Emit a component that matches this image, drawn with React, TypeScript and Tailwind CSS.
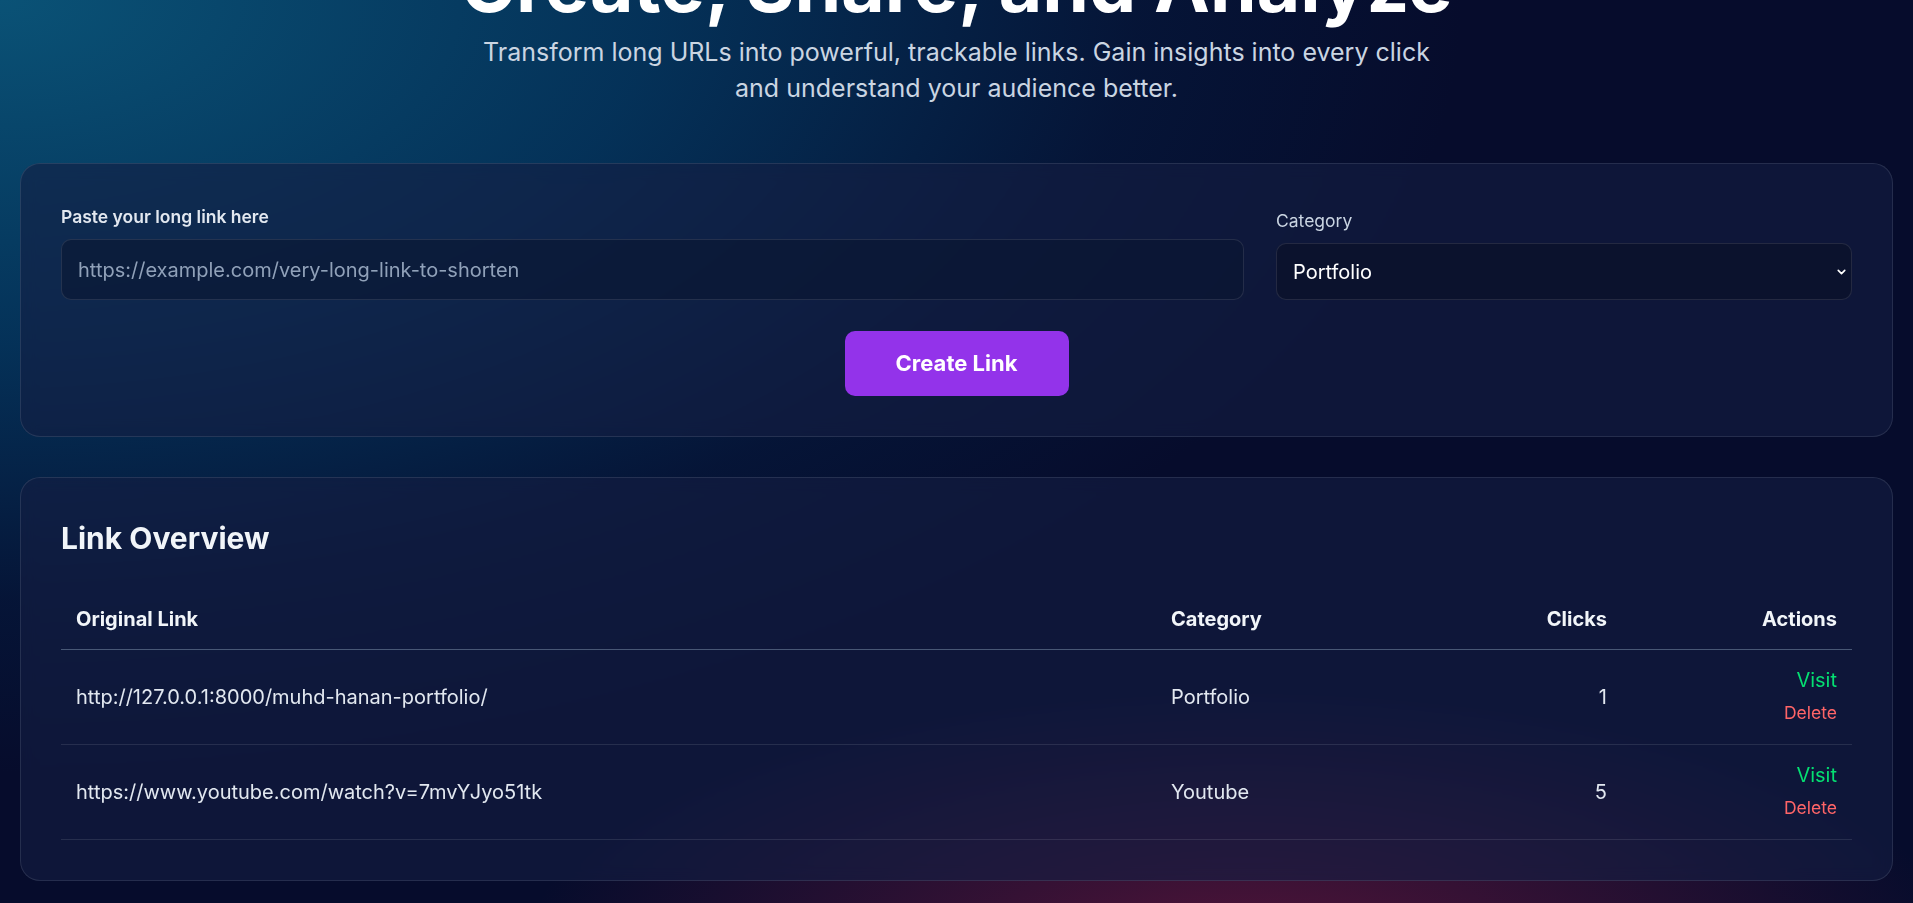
import { ChevronDown } from 'lucide-react';

type LinkRow = {
  url: string;
  category: string;
  clicks: number;
};

const links: LinkRow[] = [
  { url: 'http://127.0.0.1:8000/muhd-hanan-portfolio/', category: 'Portfolio', clicks: 1 },
  { url: 'https://www.youtube.com/watch?v=7mvYJyo51tk', category: 'Youtube', clicks: 5 },
];

export default function App() {
  return (
    <div className="h-[903px] w-full overflow-hidden bg-[#060c2c] bg-[image:radial-gradient(ellipse_85%_95%_at_0%_0%,rgba(10,82,118,1),rgba(4,56,96,0.85)_40%,rgba(4,40,80,0.3)_70%,transparent_90%),radial-gradient(ellipse_50%_38%_at_65%_105%,rgba(100,22,60,0.8),transparent_75%)] font-['Inter',sans-serif] text-slate-200">
      {/* Hero */}
      <div className="flex flex-col items-center px-5 text-center">
        <h1 className="-mt-[53px] text-[75px] font-bold leading-none text-white">
          Create, Share, and Analyze
        </h1>
        <p className="mt-[12px] max-w-[960px] text-[25px] leading-[36px] text-slate-300">
          Transform long URLs into powerful, trackable links. Gain insights into every click and understand your audience better.
        </p>
      </div>

      {/* Create form */}
      <div className="mx-5 mt-[57px] rounded-[20px] border border-white/10 bg-[#141e42]/60 p-[40px] backdrop-blur">
        <div className="flex items-end gap-[32px]">
          <div className="flex flex-1 flex-col">
            <label className="mb-[10px] text-[17.5px] font-semibold leading-[25px] text-slate-200">
              Paste your long link here
            </label>
            <input
              type="text"
              placeholder="https://example.com/very-long-link-to-shorten"
              className="h-[61px] rounded-[10px] border border-white/10 bg-[#0b1630]/60 px-4 text-[20px] text-white outline-none placeholder:text-slate-400"
            />
          </div>
          <div className="flex w-[576px] flex-col">
            <label className="mb-[10px] text-[17.5px] leading-[25px] text-slate-300">Category</label>
            <div className="relative">
              <select className="h-[57px] w-full appearance-none rounded-[10px] border border-white/10 bg-[#0b1128]/70 px-4 text-[20px] text-white outline-none">
                <option>Portfolio</option>
                <option>Youtube</option>
                <option>Other</option>
              </select>
              <ChevronDown className="pointer-events-none absolute right-[4px] top-1/2 h-[13px] w-[13px] -translate-y-1/2 text-white" strokeWidth={3} />
            </div>
          </div>
        </div>
        <div className="mt-[31px] flex justify-center">
          <button className="h-[65px] w-[224px] rounded-[10px] bg-[#9333ea] text-[22px] font-bold text-white">
            Create Link
          </button>
        </div>
      </div>

      {/* Link overview */}
      <div className="mx-5 mt-[40px] rounded-[20px] border border-white/10 bg-[#141e42]/60 p-[40px] backdrop-blur">
        <h2 className="text-[30px] font-bold leading-[40px] text-slate-100">Link Overview</h2>
        <table className="mt-[31px] w-full table-fixed border-collapse text-left">
          <colgroup>
            <col className="w-[1095px]" />
            <col />
            <col className="w-[233px]" />
            <col className="w-[230px]" />
          </colgroup>
          <thead>
            <tr className="border-b border-slate-500/70 text-[20px] text-slate-100">
              <th className="px-[15px] py-[15px] font-bold leading-[30px]">Original Link</th>
              <th className="px-[15px] py-[15px] font-bold leading-[30px]">Category</th>
              <th className="px-[15px] py-[15px] text-right font-bold leading-[30px]">Clicks</th>
              <th className="px-[15px] py-[15px] text-right font-bold leading-[30px]">Actions</th>
            </tr>
          </thead>
          <tbody>
            {links.map((link) => (
              <tr key={link.url} className="border-b border-white/10 text-[20px] text-slate-200">
                <td className="truncate px-[15px] py-[17px] align-middle">{link.url}</td>
                <td className="px-[15px] py-[17px] align-middle">{link.category}</td>
                <td className="px-[15px] py-[17px] text-right align-middle">{link.clicks}</td>
                <td className="px-[15px] pt-[15px] pb-[19px] text-right align-middle">
                  <div className="flex flex-col items-end">
                    <a className="text-[20px] leading-[30px] text-green-400">Visit</a>
                    <button className="mt-[5px] text-[17.5px] leading-[25px] text-red-400">Delete</button>
                  </div>
                </td>
              </tr>
            ))}
          </tbody>
        </table>
      </div>
    </div>
  );
}
